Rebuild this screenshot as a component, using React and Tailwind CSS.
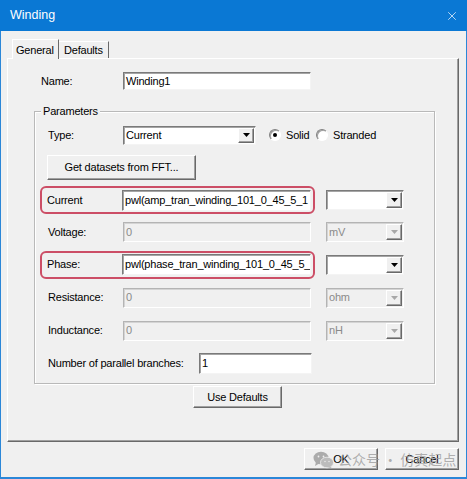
import { X } from 'lucide-react'

// classic win32 dialog look
const FONT = "font-['Liberation_Sans',Arial,sans-serif]"
const SUNKEN =
  'border border-t-[#7a7a7a] border-l-[#7a7a7a] border-r-[#f4f4f4] border-b-[#f4f4f4] shadow-[inset_1px_1px_0_#a5a5a5] bg-white'
const SUNKEN_OFF =
  'border border-t-[#b4b4b4] border-l-[#b4b4b4] border-r-white border-b-white shadow-[inset_1px_1px_0_#d4d4d4] bg-[#f0f0f0] text-[#8a8a8a]'
const RAISED =
  'bg-[#f0f0f0] border border-t-white border-l-white border-r-[#696969] border-b-[#696969] shadow-[inset_-1px_-1px_0_#a0a0a0]'

function Field({ value, disabled, className }) {
  return (
    <div
      className={`${disabled ? SUNKEN_OFF : SUNKEN} ${className} flex items-center overflow-hidden whitespace-nowrap pl-[2px]`}
    >
      {value}
    </div>
  )
}

function Combo({ value, disabled, className }) {
  return (
    <div className={`${disabled ? SUNKEN_OFF : SUNKEN} ${className} flex items-stretch p-px`}>
      <div className="flex-1 flex items-center pl-[1px] overflow-hidden whitespace-nowrap">{value}</div>
      <div className={`${RAISED} w-[16px] flex items-center justify-center`}>
        <svg width="7" height="4" viewBox="0 0 7 4">
          <polygon points="0,0 7,0 3.5,4" fill={disabled ? '#a8a8a8' : '#000'} />
        </svg>
      </div>
    </div>
  )
}

function Radio({ checked }) {
  return (
    <div className="w-[12px] h-[12px] rounded-full border border-t-[#808080] border-l-[#808080] border-r-white border-b-white bg-white flex items-center justify-center shadow-[inset_1px_1px_0_#a0a0a0]">
      {checked && <div className="w-[4px] h-[4px] rounded-full bg-black" />}
    </div>
  )
}

function Row({ label, value, unit, disabled, h = 'h-[33px]' }) {
  return (
    <div className={`${h} flex items-center pl-[13px]`}>
      <span className="w-[75px]">{label}</span>
      <Field value={value} disabled={disabled} className="w-[188px] h-[20px]" />
      <Combo value={unit} disabled={disabled} className="ml-[15px] w-[78px] h-[20px]" />
    </div>
  )
}

function Marked({ label, value, h = 'h-[33px]' }) {
  return (
    <div className={`${h} flex items-center pl-[5px]`}>
      <div className="h-[28px] border-2 border-[#cc4e66] rounded-[6px] flex items-center pl-[5px] pr-[2px]">
        <span className="w-[75px]">{label}</span>
        <Field value={value} className="w-[189px] h-[21px]" />
      </div>
      <Combo value="" className="ml-[11px] w-[78px] h-[20px]" />
    </div>
  )
}

export default function App() {
  return (
    <div className={`w-[467px] h-[479px] overflow-hidden bg-[#f0f0f0] flex flex-col relative text-[11px] tracking-[-0.2px] text-black ${FONT}`}>
      {/* title bar */}
      <div className="h-[31px] shrink-0 bg-[#0a78d4] flex items-center justify-between pl-[10px] pr-[8px] text-white text-[12.5px] tracking-normal">
        <span>Winding</span>
        <X size={14} strokeWidth={1.2} />
      </div>

      <div className="flex-1 flex flex-col pl-[6px] pr-[7px] border-x border-b-2 border-[#2b87d8]">
        {/* tabs */}
        <div className="flex items-end mt-[8px] h-[19px] ml-[5px] relative z-10">
          <div className="h-[20px] w-[47px] -mb-px bg-[#f0f0f0] border-t border-l border-white border-r border-r-[#696969] pl-[3px] pt-[2px]">
            General
          </div>
          <div className="h-[17px] w-[50px] border-t border-white border-r border-r-[#696969] pl-[5px] leading-[17px]">
            Defaults
          </div>
        </div>

        {/* tab panel */}
        <div className="h-[384px] shrink-0 flex flex-col border border-t-white border-l-white border-r-[#696969] border-b-[#696969] shadow-[inset_-1px_-1px_0_#a0a0a0]">
          <div className="flex items-center mt-[13px] pl-[33px]">
            <span className="w-[82px]">Name:</span>
            <Field value="Winding1" className="w-[188px] h-[18px]" />
          </div>

          <div className="relative mt-[21px] ml-[26px] w-[401px] border border-[#b9b9b9] shadow-[1px_1px_0_#fff,inset_1px_1px_0_#fff] pt-[7px] pb-[3px]">
            <span className="absolute -top-[9px] left-[6px] px-[2px] bg-[#f0f0f0] leading-[16px]">Parameters</span>

            <div className="h-[32px] flex items-center pl-[13px]">
              <span className="w-[75px]">Type:</span>
              <Combo value="Current" className="w-[133px] h-[19px]" />
              <div className="ml-[13px]">
                <Radio checked />
              </div>
              <span className="ml-[5px] w-[30px]">Solid</span>
              <Radio />
              <span className="ml-[5px]">Stranded</span>
            </div>

            <div className="h-[33px] flex items-center pl-[12px]">
              <div className={`${RAISED} w-[149px] h-[25px] flex items-center justify-center`}>
                Get datasets from FFT...
              </div>
            </div>

            <Marked label="Current" value="pwl(amp_tran_winding_101_0_45_5_1" h="h-[32px]" />
            <Row label="Voltage:" value="0" unit="mV" disabled h="h-[32px]" />
            <Marked label="Phase:" value="pwl(phase_tran_winding_101_0_45_5_" />
            <Row label="Resistance:" value="0" unit="ohm" disabled />
            <Row label="Inductance:" value="0" unit="nH" disabled />

            <div className="h-[33px] flex items-center pl-[13px]">
              <span className="w-[151px] whitespace-nowrap">Number of parallel branches:</span>
              <Field value="1" className="w-[113px] h-[21px]" />
            </div>
          </div>

          <div className={`${RAISED} mt-[2px] ml-[185px] w-[89px] h-[22px] flex items-center justify-center`}>
            Use Defaults
          </div>
        </div>

        {/* dialog buttons */}
        <div className="flex justify-end gap-[7px] mt-[6px]">
          <div className={`${RAISED} w-[74px] h-[22px] flex items-center justify-center`}>OK</div>
          <div className={`${RAISED} w-[74px] h-[22px] flex items-center justify-center`}>Cancel</div>
        </div>
      </div>

      {/* watermark over the buttons */}
      <div className="absolute left-[313px] top-[449px] flex items-center text-[14px] tracking-normal text-[#9c9c9c]/80 font-['Noto_Sans_CJK_SC',sans-serif] pointer-events-none">
        <svg width="21" height="18" viewBox="0 0 21 18" className="opacity-80">
          <ellipse cx="8" cy="7" rx="7.5" ry="6.3" fill="#9a9a9a" />
          <polygon points="3,11 2,15 7,12" fill="#9a9a9a" />
          <ellipse cx="14" cy="11.5" rx="6.5" ry="5.3" fill="#b0b0b0" stroke="#f0f0f0" strokeWidth="0.8" />
          <polygon points="17,15 19,17.5 14,16" fill="#b0b0b0" />
          <circle cx="5.5" cy="5.5" r="0.9" fill="#f0f0f0" />
          <circle cx="10.5" cy="5.5" r="0.9" fill="#f0f0f0" />
          <circle cx="12" cy="10.5" r="0.7" fill="#f0f0f0" />
          <circle cx="16" cy="10.5" r="0.7" fill="#f0f0f0" />
        </svg>
        <span className="ml-[4px]">公众号 · 仿真起点</span>
      </div>
    </div>
  )
}
